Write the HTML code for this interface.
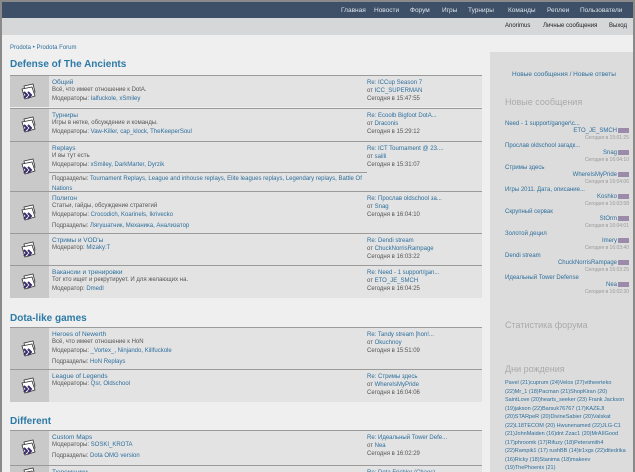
<!DOCTYPE html>
<html><head><meta charset="utf-8"><style>
*{margin:0;padding:0;box-sizing:border-box}
body{width:635px;height:472px;overflow:hidden;background:#8a8a8a;font-family:"Liberation Sans","Noto Sans CJK SC",sans-serif;font-size:6px;color:#444;position:relative}
#pg{position:absolute;left:2px;top:2px;width:631px;height:470px;background:#efefef;overflow:hidden}
.a{position:absolute;white-space:nowrap}
a,.l{color:#2d6f9c;text-decoration:none}
#nav{position:absolute;left:0;top:0;width:631px;height:16px;background:#3e5068}
#nav span{color:#dde3ea;font-size:6.5px;position:absolute;top:5px}
#sub{position:absolute;left:0;top:16px;width:631px;height:17px;background:#d6d7d9}
#sub span{position:absolute;top:5px;font-size:6px;color:#222}
h2{position:absolute;font-size:10px;color:#2d7aa6;font-weight:bold;white-space:nowrap}
.row{position:absolute;left:8px;width:472px;background:#e3e3e3;border-top:1px solid #9a9a9a}
.ic{position:absolute;left:0;top:0;bottom:0;width:39px;background:#c9c9c9}
.ic svg{position:absolute;left:10px;top:50%;margin-top:-9px}
.t{position:absolute;left:42px;font-size:6.5px;color:#2d6f9c}
.d{position:absolute;left:42px;color:#555}
.lp{position:absolute;left:357px;color:#555;line-height:8px}
#side{position:absolute;left:488px;top:50px;width:143px;height:422px;background:#dcdcdc}
#side .h{position:absolute;left:15px;font-size:9px;color:#aaa}
.b{display:inline-block;width:11px;height:5px;background:#9b8aaa;vertical-align:middle;margin-left:1px}
.it div{height:7px;line-height:7px}
.it .g{height:8px}
</style></head><body><div id="pg">
<div id="nav">
<span style="left:339px">Главная</span><span style="left:372px">Новости</span><span style="left:408px">Форум</span><span style="left:440px">Игры</span><span style="left:466px">Турниры</span><span style="left:506px">Команды</span><span style="left:545px">Реплеи</span><span style="left:578px">Пользователи</span>
</div>
<div id="sub"><span style="left:503px">Anorimus</span><span style="left:541px">Личные сообщения</span><span style="left:607px">Выход</span></div>
<div class="a l" style="left:8px;top:43px">Prodota • Prodota Forum</div>
<div id="side">
<div class="a l" style="left:22px;top:19px;font-size:6.5px">Новые сообщения / Новые ответы</div>
<div class="h a" style="top:45px">Новые сообщения</div>
<div class="a it" style="left:15px;top:69px;width:124px">
<div class="l">Need - 1 support/ganger\c...</div><div style="text-align:right" class="l">ETO_JE_SMCH<span class="b"></span></div><div class="g" style="text-align:right;color:#999;font-size:5px">Сегодня в 15:01:25</div>
<div class="l">Прослав oldschool загадк...</div><div style="text-align:right" class="l">Snag<span class="b"></span></div><div class="g" style="text-align:right;color:#999;font-size:5px">Сегодня в 16:04:10</div>
<div class="l">Стримы здесь</div><div style="text-align:right" class="l">WhereIsMyPride<span class="b"></span></div><div class="g" style="text-align:right;color:#999;font-size:5px">Сегодня в 16:04:06</div>
<div class="l">Игры 2011. Дата, описание...</div><div style="text-align:right" class="l">Koshko<span class="b"></span></div><div class="g" style="text-align:right;color:#999;font-size:5px">Сегодня в 16:03:58</div>
<div class="l">Скрупный сервак</div><div style="text-align:right" class="l">StOrm<span class="b"></span></div><div class="g" style="text-align:right;color:#999;font-size:5px">Сегодня в 16:04:01</div>
<div class="l">Золотой децил</div><div style="text-align:right" class="l">Imery<span class="b"></span></div><div class="g" style="text-align:right;color:#999;font-size:5px">Сегодня в 16:03:40</div>
<div class="l">Dendi stream</div><div style="text-align:right" class="l">ChuckNorrisRampage<span class="b"></span></div><div class="g" style="text-align:right;color:#999;font-size:5px">Сегодня в 16:03:25</div>
<div class="l">Идеальный Tower Defense</div><div style="text-align:right" class="l">Nea<span class="b"></span></div><div class="g" style="text-align:right;color:#999;font-size:5px">Сегодня в 16:02:30</div>
</div>
<div class="h a" style="top:268px">Статистика форума</div>
<div class="h a" style="top:312px">Дни рождения</div>
<div class="a l" style="left:15px;top:327px;width:124px;white-space:normal;line-height:8.5px;font-size:5.5px">Pavel (21)cuprum (24)Velos (27)vitheerteko (22)Mr_1 (18)Pacman (21)ShopKiran (20) SaintLove (20)hearts_seeker (23) Frank Jackson (19)jakson (22)Barsuk76767 (17)KAZEJI (20)STARpeR (20)DivineSabier (20)Valskat (22)L18TECOM (20) Hwunenamed (22)JLG-C1 (21)JohnMaiden (16)dnt Zzac1 (20)MrAIIGood (17)phroomk (17)Rifuzy (18)Petersmith4 (22)Rampik1 (17) rushBB (14)tr1xgs (22)ditedrika (16)Ricky (18)Stanima (18)makeev (19)ThePhoenix (21)</div>
</div>

<h2 style="left:8px;top:57px">Defense of The Ancients</h2>
<h2 style="left:8px;top:311px">Dota-like games</h2>
<h2 style="left:8px;top:414px">Different</h2>

<div id="rows"></div>
<script>
var ic='<svg width="20" height="18" viewBox="0 0 20 18"><path d="M4 3l9-2 2 8-9 3z" fill="#fff" stroke="#333" stroke-width=".8"/><path d="M2 6l10-2 3 9-10 3z" fill="#fff" stroke="#333" stroke-width=".8"/><path d="M4 9l3 3-3 3M8 9l3 3-3 3" fill="none" stroke="#3a2d6a" stroke-width="2"/></svg>';
var R=[
[73,32,'Общий','Всё, что имеет отношение к DotA.','Модераторы: Ialfuckole, xSmiley',0,'Re: ICCup Season 7','от ICC_SUPERMAN','Сегодня в 15:47:55'],
[106,33,'Турниры','Игры в нетке, обсуждение и команды.','Модераторы: Vaw-Killer, cap_klock, TheKeeperSoul',0,'Re: Ecoolb Bigfoot DotA...','от Draconis','Сегодня в 15:29:12'],
[139,50,'Replays','И вы тут есть','Модераторы: xSmiley, DarkMarter, Dyrzik','Подразделы: Tournament Replays, League and inhouse replays, Elite leagues replays, Legendary replays, Battle Of Nations','Re: ICT Tournament @ 23....','от sailli','Сегодня в 15:31:07'],
[189,42,'Полигон','Статьи, гайды, обсуждение стратегий','Модераторы: Crocodich, Koarinels, Ikrivecko','Подразделы: Лягушатник, Механика, Анализатор','Re: Прослав oldschool за...','от Snag','Сегодня в 16:04:10'],
[231,32,'Стримы и VOD\'ы','','Модератор: Mizaky:T',0,'Re: Dendi stream','от ChuckNorrisRampage','Сегодня в 16:03:22'],
[263,33,'Вакансии и тренировки','Тот кто ищет и рекрутирует. И для желающих на.','Модератор: Dmedl',0,'Re: Need - 1 support/gan...','от ETO_JE_SMCH','Сегодня в 16:04:25'],
[325,42,'Heroes of Newerth','Всё, что имеет отношение к HoN','Модераторы: _Vortex_, Ninjando, Killfuckole','Подразделы: HoN Replays','Re: Tandy stream [hon!...','от Okuchnoy','Сегодня в 15:51:09'],
[367,33,'League of Legends','','Модераторы: Qsr, Oldschool',0,'Re: Стримы здесь','от WhereIsMyPride','Сегодня в 16:04:06'],
[428,35,'Custom Maps','','Модераторы: SOSKI_KROTA','Подразделы: Dota OMG version','Re: Идеальный Tower Defe...','от Nea','Сегодня в 16:02:29'],
[463,20,'Тюремщики','','','', 'Re: Dota Frichler (Chaos)','','']
];
var h='';
R.forEach(function(r){
 var sub=r[5];
 h+='<div class="row" style="top:'+r[0]+'px;height:'+r[1]+'px"><div class="ic">'+ic+'</div>';
 h+='<div class="t a" style="top:3px">'+r[2]+'</div>';
 if(r[3])h+='<div class="d a" style="top:11px">'+r[3]+'</div>';
 var my=r[3]?20:11;
 if(r[4])h+='<div class="d a" style="top:'+my+'px">'+r[4].replace(/: (.*)$/,': <span class="l">$1</span>')+'</div>';
 if(sub){
  if(r[2]=='Replays'){h+='<div class="a" style="left:39px;top:30px;width:318px;border-top:1px solid #999"></div><div class="d" style="position:absolute;left:42px;top:32px;width:320px;line-height:10px">'+sub.replace(/: (.*)$/,': <span class="l">$1</span>')+'</div>';}
  else h+='<div class="d a" style="top:'+(my+11)+'px">'+sub.replace(/: (.*)$/,': <span class="l">$1</span>')+'</div>';
 }
 h+='<div class="lp" style="top:3px"><span class="l">'+r[6]+'</span><br>'+(r[7]?r[7].replace(/^от (.*)/,'от <span class="l">$1</span>'):'')+'<br>'+r[8]+'</div></div>';
});
document.getElementById('rows').innerHTML=h;
</script>
</div></body></html>
